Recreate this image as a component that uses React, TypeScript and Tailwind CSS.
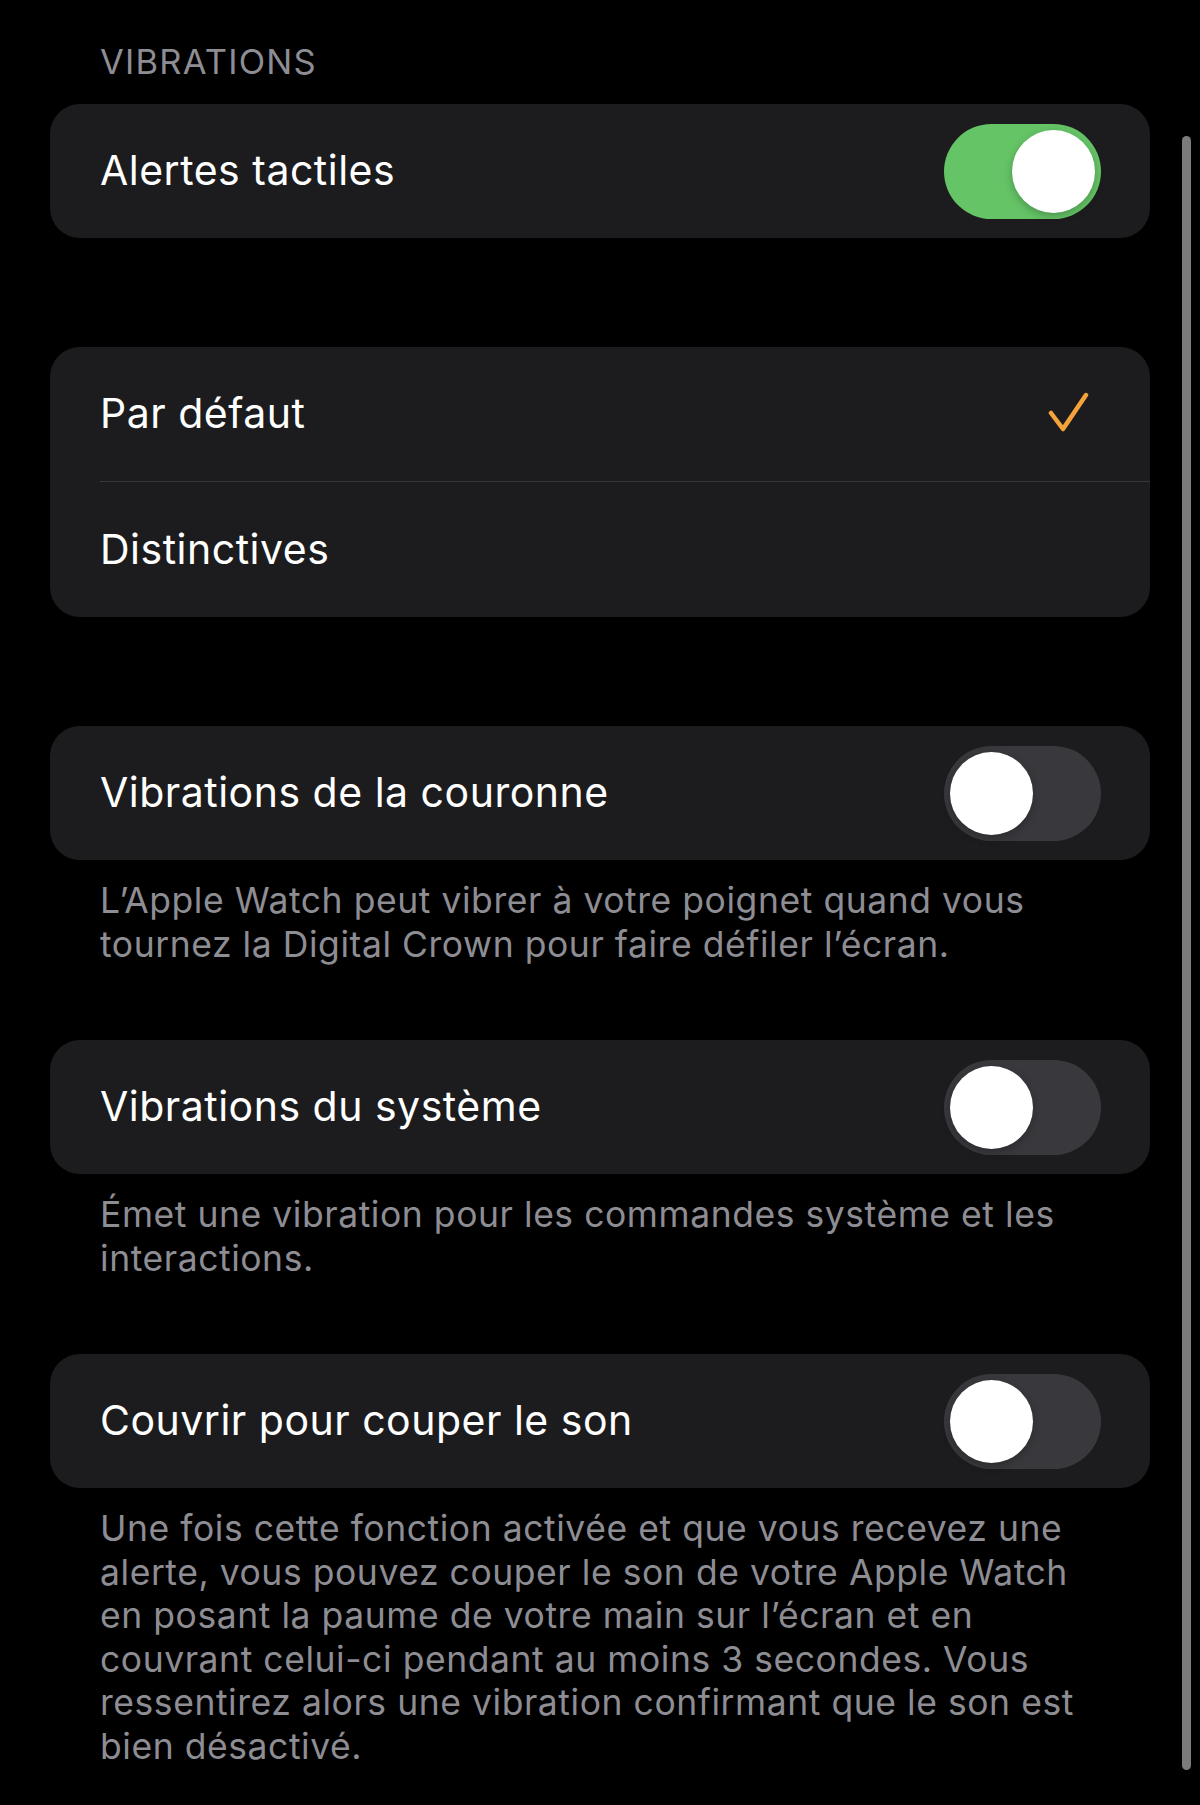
import React, { useState } from 'react';

type ToggleProps = {
  on: boolean;
  onChange: (v: boolean) => void;
};

const Toggle: React.FC<ToggleProps> = ({ on, onChange }) => (
  <button
    onClick={() => onChange(!on)}
    className={`relative h-[95px] w-[157px] shrink-0 rounded-full transition-colors ${
      on ? 'bg-[#65c466]' : 'bg-[#39393d]'
    }`}
    aria-pressed={on}
  >
    <span
      className={`absolute top-[6px] h-[83px] w-[83px] rounded-full bg-white shadow-[0_3px_8px_rgba(0,0,0,0.25)] transition-all ${
        on ? 'left-[68px]' : 'left-[6px]'
      }`}
    />
  </button>
);

const Check = () => (
  <svg width="44" height="44" viewBox="0 0 44 44" fill="none">
    <polyline
      points="4,21 16,37 39,3"
      stroke="#f4a23a"
      strokeWidth="4.5"
      strokeLinecap="round"
      strokeLinejoin="round"
    />
  </svg>
);

const ToggleCard: React.FC<{ label: string; on: boolean; onChange: (v: boolean) => void }> = ({
  label,
  on,
  onChange,
}) => (
  <div className="flex h-[134px] items-center justify-between rounded-[30px] bg-[#1c1c1e] pl-[50px] pr-[49px]">
    <span className="text-[41px] tracking-[0.5px] text-white">{label}</span>
    <Toggle on={on} onChange={onChange} />
  </div>
);

const Footer: React.FC<{ lines: string[] }> = ({ lines }) => (
  <div className="mt-[19px] px-[50px] text-[35.5px] leading-[43.5px] tracking-[0.55px] text-[#8d8d93]">
    {lines.map((l) => (
      <div key={l} className="whitespace-nowrap">
        {l}
      </div>
    ))}
  </div>
);

export default function App() {
  const [haptic, setHaptic] = useState(true);
  const [mode, setMode] = useState<'default' | 'distinct'>('default');
  const [crown, setCrown] = useState(false);
  const [system, setSystem] = useState(false);
  const [cover, setCover] = useState(false);

  return (
    <div
      className="relative min-h-[1805px] w-[1200px] bg-black px-[50px]"
      style={{ fontFamily: 'Inter, "Noto Sans", sans-serif' }}
    >
      {/* scroll indicator */}
      <div className="absolute left-[1182px] top-[136px] h-[1634px] w-[9px] rounded-full bg-[#7b7b7b]" />

      <div className="pt-[41px] pl-[50px] text-[34.5px] leading-[42px] tracking-[1.2px] text-[#8d8d93]">
        VIBRATIONS
      </div>

      <div className="mt-[21px]">
        <ToggleCard label="Alertes tactiles" on={haptic} onChange={setHaptic} />
      </div>

      {/* haptic style */}
      <div className="mt-[109px] overflow-hidden rounded-[30px] bg-[#1c1c1e]">
        <button
          onClick={() => setMode('default')}
          className="flex h-[134px] w-full items-center justify-between pl-[50px] pr-[59px] text-left"
        >
          <span className="text-[41px] tracking-[0.5px] text-white">Par défaut</span>
          {mode === 'default' && <Check />}
        </button>
        <div className="ml-[50px] h-px bg-[#38383a]" />
        <button
          onClick={() => setMode('distinct')}
          className="flex h-[135px] w-full items-center justify-between pl-[50px] pr-[59px] text-left"
        >
          <span className="text-[41px] tracking-[0.5px] text-white">Distinctives</span>
          {mode === 'distinct' && <Check />}
        </button>
      </div>

      <div className="mt-[109px]">
        <ToggleCard label="Vibrations de la couronne" on={crown} onChange={setCrown} />
      </div>
      <Footer
        lines={[
          'L’Apple Watch peut vibrer à votre poignet quand vous',
          'tournez la Digital Crown pour faire défiler l’écran.',
        ]}
      />

      <div className="mt-[74px]">
        <ToggleCard label="Vibrations du système" on={system} onChange={setSystem} />
      </div>
      <Footer lines={['Émet une vibration pour les commandes système et les', 'interactions.']} />

      <div className="mt-[74px]">
        <ToggleCard label="Couvrir pour couper le son" on={cover} onChange={setCover} />
      </div>
      <Footer
        lines={[
          'Une fois cette fonction activée et que vous recevez une',
          'alerte, vous pouvez couper le son de votre Apple Watch',
          'en posant la paume de votre main sur l’écran et en',
          'couvrant celui-ci pendant au moins 3 secondes. Vous',
          'ressentirez alors une vibration confirmant que le son est',
          'bien désactivé.',
        ]}
      />
    </div>
  );
}
